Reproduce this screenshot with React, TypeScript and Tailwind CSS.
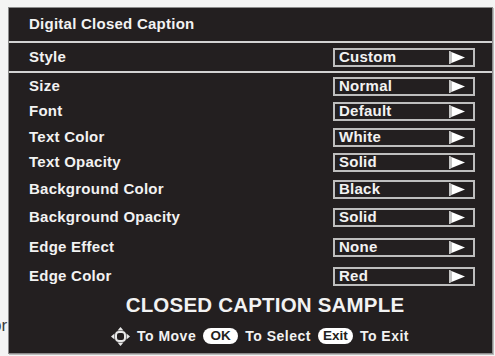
import type { ReactNode } from 'react'

type Row = {
  label: string
  value: string
  h: string
}

const rows: Row[] = [
  { label: 'Size', value: 'Normal', h: 'h-[26px]' },
  { label: 'Font', value: 'Default', h: 'h-[25px]' },
  { label: 'Text Color', value: 'White', h: 'h-[26px]' },
  { label: 'Text Opacity', value: 'Solid', h: 'h-[25px]' },
  { label: 'Background Color', value: 'Black', h: 'h-[29px]' },
  { label: 'Background Opacity', value: 'Solid', h: 'h-[27px]' },
  { label: 'Edge Effect', value: 'None', h: 'h-[32px]' },
  { label: 'Edge Color', value: 'Red', h: 'h-[27px]' },
]

function Arrow() {
  return (
    <svg width="16" height="13" viewBox="0 0 16 13" className="shrink-0">
      <polygon points="0,0 16,6.5 0,13" fill="#ffffff" />
      <polygon points="0,0 3,1.2 3,11.8 0,13" fill="#c4c4c4" />
    </svg>
  )
}

function ValueBox({ value }: { value: string }) {
  return (
    <div className="flex h-[19px] w-[142px] items-center justify-between border-2 border-[#bebebe] pl-[4px] pr-[8px]">
      <span>{value}</span>
      <Arrow />
    </div>
  )
}

function MenuRow({ label, value, h }: Row) {
  return (
    <div className={`flex items-center justify-between pl-[20px] pr-[17px] ${h}`}>
      <span>{label}</span>
      <ValueBox value={value} />
    </div>
  )
}

function Divider() {
  return <div className="h-[2px] bg-[#d2d2d2]" />
}

function Pill({ children }: { children: ReactNode }) {
  return (
    <span className="inline-flex h-[16px] w-[35px] items-center justify-center rounded-full bg-white text-[13.5px] font-bold leading-none tracking-[0px] text-[#231f20]">
      {children}
    </span>
  )
}

function MoveIcon() {
  return (
    <svg width="19" height="19" viewBox="0 0 19 19" className="shrink-0">
      <polygon points="9.5,0 6.5,3.5 12.5,3.5" fill="#e8e8e8" />
      <polygon points="9.5,19 6.5,15.5 12.5,15.5" fill="#e8e8e8" />
      <polygon points="0,9.5 3.5,6.5 3.5,12.5" fill="#e8e8e8" />
      <polygon points="19,9.5 15.5,6.5 15.5,12.5" fill="#e8e8e8" />
      <rect x="5" y="5" width="9" height="9" rx="3" fill="none" stroke="#e8e8e8" strokeWidth="2" />
    </svg>
  )
}

export default function App() {
  return (
    <div
      className="relative h-[356px] w-[495px] overflow-hidden bg-[#f4f4f4] pl-[8px] pt-[7px]"
      style={{ fontFamily: '"Liberation Sans", Arial, sans-serif' }}
    >
      <span className="absolute left-[-8px] top-[313px] text-[17px] text-[#3a3a3a]">or</span>
      <div className="h-[347px] w-[485px] border border-[#8c8c8c] bg-[#231f20] text-[15px] font-bold tracking-[0.25px] text-[#f2f2f2] shadow-[1px_1px_0_#bbbbbb]">
        <div className="flex h-[33px] items-center pl-[20px]">Digital Closed Caption</div>
        <Divider />
        <div className="flex h-[28px] items-center justify-between pl-[20px] pr-[17px]">
          <span>Style</span>
          <ValueBox value="Custom" />
        </div>
        <Divider />
        {rows.map((r) => (
          <MenuRow key={r.label} {...r} />
        ))}
        <div className="flex h-[30px] items-center justify-center pl-[29px] text-[20.5px] tracking-[0.2px]">
          CLOSED CAPTION SAMPLE
        </div>
        <div className="flex h-[32px] items-center justify-center gap-[7px] pl-[19px] text-[14px] tracking-[0.5px]">
          <MoveIcon />
          <span>To Move</span>
          <Pill>OK</Pill>
          <span>To Select</span>
          <Pill>Exit</Pill>
          <span>To Exit</span>
        </div>
      </div>
    </div>
  )
}
